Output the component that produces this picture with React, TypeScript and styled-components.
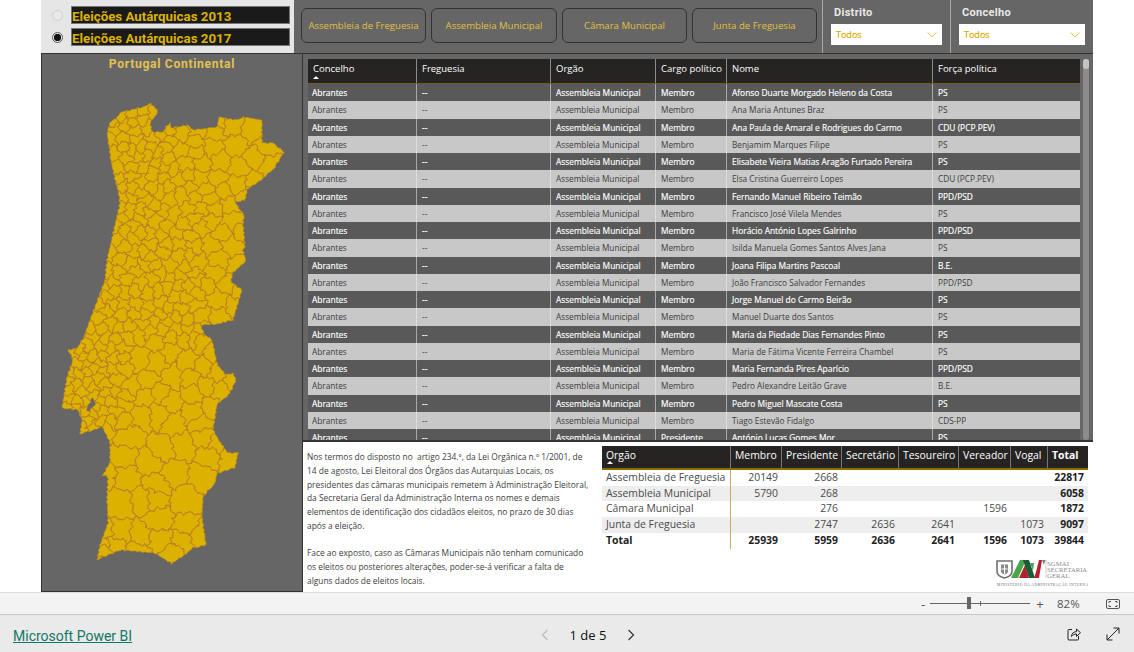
import React, { useMemo } from "react";
import styled, { createGlobalStyle } from "styled-components";

const Global = createGlobalStyle`
  html, body { margin: 0; padding: 0; background: #fff; overflow: hidden; }
  * { box-sizing: border-box; }
  body { font-family: "Open Sans", "Liberation Sans", sans-serif; }
`;

const Page = styled.div`width: 1134px; height: 652px; display: flex; flex-direction: column; background: #fff;`;
const Report = styled.div`width: 1052px; height: 592px; margin-left: 41px; display: flex; flex-direction: column; flex: none;`;
const TopRow = styled.div`height: 53px; display: flex; flex: none;`;
const RadioPanel = styled.div`width: 253px; flex: none; background: #e6e6e6; padding: 6px 4px 0 11px; display: flex; flex-direction: column; gap: 4px;`;
const RadioRow = styled.div`display: flex; align-items: center; gap: 8px; height: 18px;`;
const Radio = styled.span<{ $on?: boolean }>`
  width: 11px; height: 11px; border-radius: 50%; flex: none;
  border: 1px solid ${p => (p.$on ? "#555" : "#cfcfcf")};
  background: ${p => (p.$on ? "radial-gradient(circle, #111 0 3.4px, #eee 3.9px)" : "#e9e9e9")};
`;
const RadioLabel = styled.span`
  flex: 1; height: 18px; background: #1a1a1a; color: #dcb200; border: 1px solid #777;
  font: 700 13.3px/19px Roboto, sans-serif; white-space: nowrap; overflow: hidden;
`;
const Band = styled.div`flex: 1; min-width: 0; background: #666; display: flex; padding-left: 7px;`;
const Buttons = styled.div`display: flex; gap: 5px; padding-top: 8px; width: 521px; flex: none;`;
const PageButton = styled.div<{ $w: number }>`
  width: ${p => p.$w}px; height: 35px; border: 1.5px solid #333; border-radius: 6px; flex: none;
  color: #e0c040; font-size: 9.6px; display: flex; align-items: center; justify-content: center; white-space: nowrap;
`;
const Slicer = styled.div<{ $w: number }>`
  width: ${p => p.$w}px; border-left: 1px solid #a8a8a8; padding: 5px 8px 0 8px; flex: none;
`;
const SlicerTitle = styled.div`color: #e8e8e8; font: 700 11px/15px Roboto, sans-serif; letter-spacing: .3px; padding-left: 3px;`;
const Select = styled.div`
  margin-top: 4px; height: 21px; background: #fff; color: #d9ad00; font-size: 9px; -webkit-text-stroke: .2px #d9ad00;
  display: flex; align-items: center; justify-content: space-between; padding: 0 5px 0 5px;
`;
const Body = styled.div`flex: 1; display: flex; min-height: 0; border-top: 1px solid #333;`;
const MapPanel = styled.div`width: 262px; flex: none; background: #666; border: 1px solid #333; border-top: 0; display: flex; flex-direction: column;`;
const MapTitle = styled.div`height: 16px; text-align: center; color: #e2c152; font: 700 12.2px/20px Roboto, sans-serif; letter-spacing: .65px; flex: none;`;
const MapSvg = styled.svg`display: block; width: 260px; height: 522px; flex: none;`;
const RightCol = styled.div`flex: 1; display: flex; flex-direction: column; min-width: 0;`;
const TablePanel = styled.div`height: 388px; background: #666; border-bottom: 2px solid #333; display: flex; padding: 5px 2px 0 5px; gap: 3px; flex: none;`;
const TableView = styled.div`width: 772px; overflow: hidden; flex: none;`;
const GRID = "109px 134px 105px 71px 206px 147px";
const HeadRow = styled.div`
  display: grid; grid-template-columns: ${GRID}; height: 25px; background: #252423; border-bottom: 1px solid #6d5f22;
`;
const HeadCell = styled.div`
  position: relative; color: #fff; font-size: 9.5px; line-height: 19px; padding-left: 5px;
  border-right: 1px solid #8a8a8a; white-space: nowrap;
  &:last-child { border-right: 0; }
`;
const SortCaret = styled.i`
  position: absolute; left: 5px; bottom: 4px; width: 0; height: 0;
  border-left: 3.5px solid transparent; border-right: 3.5px solid transparent; border-bottom: 3px solid #fff;
`;
const DataRow = styled.div<{ $light: boolean }>`
  display: grid; grid-template-columns: ${GRID}; height: 17.25px;
  background: ${p => (p.$light ? "#c8c8c8" : "#595959")};
  color: ${p => (p.$light ? "#3c3c3c" : "#fff")};
  -webkit-text-stroke: ${p => (p.$light ? "0" : ".15px #fff")};
`;
const DataCell = styled.div<{ $light: boolean }>`
  font-size: ${p => (p.$light ? 8.25 : 8.4)}px; line-height: 17.6px; padding-left: 5px; white-space: nowrap; overflow: hidden;
  border-right: 1px solid ${p => (p.$light ? "#dedede" : "#a9a9a9")};
  &:first-child { padding-left: 4px; }
  &:last-child { border-right: 0; }
`;
const Scroll = styled.div`width: 6px; background: #8c8c8c; border-radius: 3px; position: relative; flex: none;`;
const Thumb = styled.div`position: absolute; top: 0; left: 0; width: 6px; height: 10px; border-radius: 3px; background: #c4c4c4;`;
const BottomRow = styled.div`flex: 1; display: flex; min-height: 0; background: #fff;`;
const Note = styled.div`
  width: 299px; flex: none; padding: 8px 0 0 4px; color: #3d3d3d; font-size: 8.4px; line-height: 13.75px; white-space: pre;
`;
const RightBottom = styled.div`flex: 1; display: flex; flex-direction: column; min-width: 0; padding-top: 4px;`;
const MGRID = "129px 51px 60px 57px 60px 52px 37px 40px";
const MatrixHead = styled.div`
  display: grid; grid-template-columns: ${MGRID}; width: 486px; height: 24px; background: #252423; border-bottom: 2px solid #8c6d00; color: #fff;
`;
const MHeadCell = styled.div<{ $bold?: boolean }>`
  position: relative; font-size: 10.4px; line-height: 18px; padding-left: 4px; font-weight: ${p => (p.$bold ? 700 : 400)};
  border-right: 1px solid #777; white-space: nowrap;
  &:last-child { border-right: 0; }
`;
const MRow = styled.div<{ $alt?: boolean; $bold?: boolean }>`
  display: grid; grid-template-columns: ${MGRID}; width: 486px; height: 15.7px;
  background: ${p => (p.$alt ? "#eeeeee" : "#fff")};
  color: ${p => (p.$bold ? "#222" : "#4a4a4a")}; font-weight: ${p => (p.$bold ? 700 : 400)};
`;
const MLabel = styled.div`font-size: 10.4px; line-height: 15.8px; padding-left: 4px; border-right: 1px solid #c9ad58; white-space: nowrap;`;
const MValue = styled.div<{ $bold?: boolean }>`
  font-size: 10.4px; line-height: 15.8px; text-align: right; padding-right: 4px; white-space: nowrap;
  font-weight: ${p => (p.$bold ? 700 : "inherit")}; color: ${p => (p.$bold ? "#222" : "inherit")};
`;
const LogoWrap = styled.div`align-self: flex-end; margin-top: 12px; margin-right: 5px; width: 92px; height: 30px;`;
const ZoomBar = styled.div`
  height: 23px; flex: none; background: #f3f3f3; border-top: 1px solid #ddd; border-bottom: 1px solid #c8c8c8;
  display: flex; align-items: center; justify-content: flex-end; padding-right: 14px; color: #555; font-size: 11.5px;
`;
const ZoomMark = styled.span`width: 10px; text-align: center; font-size: 13px; line-height: 16px; color: #555;`;
const Slider = styled.div`position: relative; width: 100px; height: 1px; background: #666; margin: 0 5px 0 2px;`;
const SliderThumb = styled.i`position: absolute; left: 37px; top: -6px; width: 4px; height: 12px; background: #666;`;
const SliderTick = styled.i`position: absolute; left: 50px; top: -2px; width: 1px; height: 5px; background: #666;`;
const ZoomValue = styled.span`margin-left: 12px; width: 25px;`;
const FitIcon = styled.svg`margin-left: 24px; display: block;`;
const Footer = styled.div`flex: 1; background: #eaeaea; display: flex; align-items: center; padding: 0 14px 0 13px;`;
const Link = styled.a`color: #117865; font: 400 14px/18px Roboto, sans-serif; text-decoration: underline; width: 120px; margin-top: 5px; white-space: nowrap; flex: none;`;
const Pager = styled.div`margin-left: 408px; display: flex; align-items: center; width: 94px; justify-content: space-between; color: #111; font: 400 13px/16px "Open Sans", sans-serif; margin-top: 2px;`;
const FooterIcons = styled.div`margin-left: auto; display: flex; gap: 25px; align-items: center;`;

/* ---------- map ---------- */
const OUTLINE: number[][] = [[83,339],[105,280],[107,260],[120,203],[118,190],[112,167],[107,133],[110,123],[122,112],[143,107],[151,103],[158,112],[150,123],[152,132],[162,132],[170,123],[171,128],[188,125],[193,130],[217,127],[219,117],[235,120],[243,117],[262,120],[262,143],[273,143],[284,152],[273,170],[263,178],[247,190],[245,200],[235,202],[244,215],[243,223],[245,247],[243,250],[246,262],[233,272],[231,282],[242,290],[233,320],[217,324],[200,325],[204,334],[212,340],[217,363],[225,375],[233,373],[236,380],[230,393],[217,405],[213,430],[227,453],[238,453],[235,468],[217,473],[215,483],[203,497],[202,517],[206,545],[193,548],[172,564],[155,553],[120,550],[97,560],[100,545],[108,523],[107,497],[108,477],[103,475],[110,462],[110,443],[102,427],[80,434],[82,420],[78,410],[62,408],[67,377],[73,360],[68,350],[77,348]];
const HOLE: number[][] = [[93,397],[95,404],[89,412],[86,410],[90,402]];
/* the large municipalities of the south, as read from the picture (crop coordinates, /3 + origin) */
const SOUTH: number[][] = [[200,320],[190,380],[200,440],[270,400],[340,430],[430,440],[370,345],[450,380],[290,462],[310,360],[180,520],[280,505],[380,510],[250,510],[295,570],[380,590],[180,610],[240,620],[300,630],[370,630],[415,615],[130,660],[165,640],[230,660],[340,670],[210,170],[240,90],[290,100],[340,140],[250,250],[340,280],[420,280],[440,170],[480,180],[380,90],[430,110],[300,190],[330,215],[470,130],[400,250],[430,320],[400,190],[470,340],[510,390]].map(([x, y]) => [x / 3 + 60, y / 3 + 330]);

const wob = (x: number, y: number): [number, number] => [
  x + 1.5 * Math.sin(y * 0.63 + x * 0.21) + 0.9 * Math.sin(y * 1.37 - x * 0.9) + 0.35 * Math.sin(y * 3.1 + x * 2.3),
  y + 1.5 * Math.sin(x * 0.57 - y * 0.19) + 0.9 * Math.sin(x * 1.29 + y * 0.8) + 0.35 * Math.sin(x * 2.9 - y * 2.1),
];
const rim = (x: number, y: number): [number, number] => [
  x + 0.7 * Math.sin(y * 1.3 + x * 0.7),
  y + 0.7 * Math.sin(x * 1.5 - y * 0.6),
];
function inPoly(x: number, y: number, poly: number[][]) {
  let c = false;
  for (let i = 0, j = poly.length - 1; i < poly.length; j = i++) {
    const [xi, yi] = poly[i], [xj, yj] = poly[j];
    if (yi > y !== yj > y && x < ((xj - xi) * (y - yi)) / (yj - yi) + xi) c = !c;
  }
  return c;
}
function toPath(poly: number[][], step: number, warp: (x: number, y: number) => [number, number]) {
  let d = "";
  poly.forEach((a, i) => {
    const b = poly[(i + 1) % poly.length];
    const n = Math.max(1, Math.round(Math.hypot(b[0] - a[0], b[1] - a[1]) / step));
    for (let k = 0; k < n; k++) {
      const [px, py] = warp(a[0] + ((b[0] - a[0]) * k) / n, a[1] + ((b[1] - a[1]) * k) / n);
      d += `${d ? "L" : "M"}${px.toFixed(1)} ${py.toFixed(1)}`;
    }
  });
  return d + "Z";
}
function buildCells() {
  let s = 20170101;
  const rnd = () => {
    s |= 0; s = (s + 0x6d2b79f5) | 0;
    let t = Math.imul(s ^ (s >>> 15), 1 | s);
    t = (t + Math.imul(t ^ (t >>> 7), 61 | t)) ^ t;
    return ((t ^ (t >>> 14)) >>> 0) / 4294967296;
  };
  const radius = (x: number, y: number) => {
    if (y > 425 && x > 105) return 60;
    if (y > 340 && x > 125) return 15;
    if (y > 340) return 7.5;
    if (y < 240) return (x < 170 ? 8.5 : 10.5) + Math.max(0, x - 215) * 0.18;
    return x > 200 ? 13.5 : 8.5;
  };
  const sites: number[][] = SOUTH.slice();
  for (let i = 0; i < 20000; i++) {
    const x = 62 + rnd() * 224, y = 103 + rnd() * 461;
    if (!inPoly(x, y, OUTLINE)) continue;
    const r = radius(x, y);
    if (sites.every(q => Math.hypot(q[0] - x, q[1] - y) > r)) sites.push([x, y]);
  }
  const d: string[] = [];
  sites.forEach((p, i) => {
    let poly = [[40, 90], [300, 90], [300, 580], [40, 580]];
    sites.forEach((q, j) => {
      if (i === j || Math.hypot(p[0] - q[0], p[1] - q[1]) > 130) return;
      const mx = (p[0] + q[0]) / 2, my = (p[1] + q[1]) / 2, nx = q[0] - p[0], ny = q[1] - p[1];
      const side = (v: number[]) => (v[0] - mx) * nx + (v[1] - my) * ny;
      const out: number[][] = [];
      poly.forEach((a, k) => {
        const b = poly[(k + 1) % poly.length], sa = side(a), sb = side(b);
        if (sa <= 0) out.push(a);
        if (sa < 0 !== sb < 0) {
          const t = sa / (sa - sb);
          out.push([a[0] + (b[0] - a[0]) * t, a[1] + (b[1] - a[1]) * t]);
        }
      });
      poly = out;
    });
    if (poly.length > 2) d.push(toPath(poly, 2, wob));
  });
  return d.join("");
}

const PortugalMap: React.FC = () => {
  const cells = useMemo(buildCells, []);
  const shape = useMemo(() => toPath(OUTLINE, 2.5, rim) + toPath(HOLE, 3, rim), []);
  return (
    <MapSvg viewBox="42 70 260 522" aria-label="Mapa de Portugal Continental">
      <defs>
        <clipPath id="pt"><path d={shape} clipRule="evenodd" /></clipPath>
      </defs>
      <path d={shape} fill="#dcb100" fillRule="evenodd" stroke="#c08a1c" strokeWidth=".6" />
      <g clipPath="url(#pt)">
        <path d={cells} fill="none" stroke="#b8802a" strokeWidth=".8" strokeLinejoin="round" />
      </g>
    </MapSvg>
  );
};

/* ---------- data ---------- */
const ROWS: [string, string, string][] = [
  ["Membro", "Afonso Duarte Morgado Heleno da Costa", "PS"],
  ["Membro", "Ana Maria Antunes Braz", "PS"],
  ["Membro", "Ana Paula de Amaral e Rodrigues do Carmo", "CDU (PCP.PEV)"],
  ["Membro", "Benjamim Marques Filipe", "PS"],
  ["Membro", "Elisabete Vieira Matias Aragão Furtado Pereira", "PS"],
  ["Membro", "Elsa Cristina Guerreiro Lopes", "CDU (PCP.PEV)"],
  ["Membro", "Fernando Manuel Ribeiro Teimão", "PPD/PSD"],
  ["Membro", "Francisco José Vilela Mendes", "PS"],
  ["Membro", "Horácio António Lopes Galrinho", "PPD/PSD"],
  ["Membro", "Isilda Manuela Gomes Santos Alves Jana", "PS"],
  ["Membro", "Joana Filipa Martins Pascoal", "B.E."],
  ["Membro", "João Francisco Salvador Fernandes", "PPD/PSD"],
  ["Membro", "Jorge Manuel do Carmo Beirão", "PS"],
  ["Membro", "Manuel Duarte dos Santos", "PS"],
  ["Membro", "Maria da Piedade Dias Fernandes Pinto", "PS"],
  ["Membro", "Maria de Fátima Vicente Ferreira Chambel", "PS"],
  ["Membro", "Maria Fernanda Pires Aparício", "PPD/PSD"],
  ["Membro", "Pedro Alexandre Leitão Grave", "B.E."],
  ["Membro", "Pedro Miguel Mascate Costa", "PS"],
  ["Membro", "Tiago Estevão Fidalgo", "CDS-PP"],
  ["Presidente", "António Lucas Gomes Mor", "PS"],
];
const HEADS = ["Concelho", "Freguesia", "Orgão", "Cargo político", "Nome", "Força política"];
const MHEADS = ["Orgão", "Membro", "Presidente", "Secretário", "Tesoureiro", "Vereador", "Vogal", "Total"];
const MROWS: string[][] = [
  ["Assembleia de Freguesia", "20149", "2668", "", "", "", "", "22817"],
  ["Assembleia Municipal", "5790", "268", "", "", "", "", "6058"],
  ["Câmara Municipal", "", "276", "", "", "1596", "", "1872"],
  ["Junta de Freguesia", "", "2747", "2636", "2641", "", "1073", "9097"],
  ["Total", "25939", "5959", "2636", "2641", "1596", "1073", "39844"],
];
const NOTE = `Nos termos do disposto no  artigo 234.º, da Lei Orgânica n.º 1/2001, de
14 de agosto, Lei Eleitoral dos Órgãos das Autarquias Locais, os
presidentes das câmaras municipais remetem à Administração Eleitoral,
da Secretaria Geral da Administração Interna os nomes e demais
elementos de identificação dos cidadãos eleitos, no prazo de 30 dias
após a eleição.

Face ao exposto, caso as Câmaras Municipais não tenham comunicado
os eleitos ou posteriores alterações, poder-se-á verificar a falta de
alguns dados de eleitos locais.`;

const Chevron: React.FC<{ color: string }> = ({ color }) => (
  <svg width="10" height="6" viewBox="0 0 10 6"><path d="M.5 .5L5 5l4.500-4.500" fill="none" stroke={color} strokeWidth="1" /></svg>
);

const Logo: React.FC = () => (
  <svg width="92" height="30" viewBox="0 0 92 30">
    <path d="M1 1h15v10c0 4-3 6-7.500 7C4 17 1 15 1 11z" fill="#fff" stroke="#6f6f6f" strokeWidth="1.6" />
    <path d="M5 4.500h7v7c0 1.500-2 2.500-3.500 3-1.500-.5-3.500-1.500-3.500-3z" fill="#8a8a8a" />
    <path d="M8.500 5v9M5.500 9h6" stroke="#fff" strokeWidth="1" />
    <path d="M15 18L24 0h6l-8 18z" fill="#4aa64a" />
    <path d="M23 18l6-13 4 13z" fill="#b5202a" />
    <path d="M27 0h6l6 18h-6z" fill="#1a5c38" />
    <path d="M34 3l4 0-1 8z" fill="#4aa64a" />
    <path d="M38 18l2-6 3-12h3l-3 18z" fill="#b5202a" />
    <path d="M46 0h3.500l-1.700 5z" fill="#808080" />
    <path d="M50 0v18" stroke="#bbb" strokeWidth=".7" />
    <text x="51" y="6" fontFamily="Liberation Serif, serif" fontSize="6.800" fill="#8c8c8c">SGMAI</text>
    <text x="51" y="12" fontFamily="Liberation Serif, serif" fontSize="6.600" fill="#8c8c8c">SECRETARIA</text>
    <text x="51" y="18" fontFamily="Liberation Serif, serif" fontSize="6.800" fill="#8c8c8c">GERAL</text>
    <text x="1" y="26" fontFamily="Liberation Serif, serif" fontSize="3.500" letterSpacing=".55" fill="#666">MINISTÉRIO DA ADMINISTRAÇÃO INTERNA</text>
  </svg>
);

export default function App() {
  return (
    <Page>
      <Global />
      <Report>
        <TopRow>
          <RadioPanel>
            <RadioRow><Radio /><RadioLabel>Eleições Autárquicas 2013</RadioLabel></RadioRow>
            <RadioRow><Radio $on /><RadioLabel>Eleições Autárquicas 2017</RadioLabel></RadioRow>
          </RadioPanel>
          <Band>
            <Buttons>
              <PageButton $w={125}>Assembleia de Freguesia</PageButton>
              <PageButton $w={126}>Assembleia Municipal</PageButton>
              <PageButton $w={125}>Câmara Municipal</PageButton>
              <PageButton $w={125}>Junta de Freguesia</PageButton>
            </Buttons>
            <Slicer $w={128}>
              <SlicerTitle>Distrito</SlicerTitle>
              <Select>Todos<Chevron color="#e3c84f" /></Select>
            </Slicer>
            <Slicer $w={143}>
              <SlicerTitle>Concelho</SlicerTitle>
              <Select>Todos<Chevron color="#e3c84f" /></Select>
            </Slicer>
          </Band>
        </TopRow>
        <Body>
          <MapPanel>
            <MapTitle>Portugal Continental</MapTitle>
            <PortugalMap />
          </MapPanel>
          <RightCol>
            <TablePanel>
              <TableView>
                <HeadRow>
                  {HEADS.map((h, i) => (
                    <HeadCell key={h}>{h}{i === 0 && <SortCaret />}</HeadCell>
                  ))}
                </HeadRow>
                {ROWS.map((r, i) => {
                  const light = i % 2 === 1;
                  return (
                    <DataRow key={r[1]} $light={light}>
                      {["Abrantes", "--", "Assembleia Municipal", r[0], r[1], r[2]].map((c, k) => (
                        <DataCell key={k} $light={light}>{c}</DataCell>
                      ))}
                    </DataRow>
                  );
                })}
              </TableView>
              <Scroll><Thumb /></Scroll>
            </TablePanel>
            <BottomRow>
              <Note>{NOTE}</Note>
              <RightBottom>
                <MatrixHead>
                  {MHEADS.map((h, i) => (
                    <MHeadCell key={h} $bold={i === 7}>
                      {h}{i === 0 && <SortCaret />}
                    </MHeadCell>
                  ))}
                </MatrixHead>
                {MROWS.map((r, i) => (
                  <MRow key={r[0]} $alt={i % 2 === 1} $bold={i === 4}>
                    <MLabel>{r[0]}</MLabel>
                    {r.slice(1).map((v, k) => <MValue key={k} $bold={k === 6}>{v}</MValue>)}
                  </MRow>
                ))}
                <LogoWrap><Logo /></LogoWrap>
              </RightBottom>
            </BottomRow>
          </RightCol>
        </Body>
      </Report>
      <ZoomBar>
        <ZoomMark>-</ZoomMark>
        <Slider><SliderThumb /><SliderTick /></Slider>
        <ZoomMark>+</ZoomMark>
        <ZoomValue>82%</ZoomValue>
        <FitIcon width="14" height="10" viewBox="0 0 14 10">
          <rect x=".5" y=".5" width="13" height="9" rx="1.500" fill="none" stroke="#555" />
          <path d="M3 4V2.500h2M9 2.500h2V4M3 6v1.500h2M9 7.500h2V6" fill="none" stroke="#555" />
        </FitIcon>
      </ZoomBar>
      <Footer>
        <Link href="#">Microsoft Power BI</Link>
        <Pager>
          <svg width="8" height="12" viewBox="0 0 8 12"><path d="M6.500 1L1.500 6l5 5" fill="none" stroke="#bbb" strokeWidth="1.200" /></svg>
          <span>1 de 5</span>
          <svg width="8" height="12" viewBox="0 0 8 12"><path d="M1.500 1l5 5-5 5" fill="none" stroke="#333" strokeWidth="1.200" /></svg>
        </Pager>
        <FooterIcons>
          <svg width="14" height="14" viewBox="0 0 14 14">
            <path d="M5 2.500H2a1 1 0 0 0-1 1V12a1 1 0 0 0 1 1h8.500a1 1 0 0 0 1-1V9" fill="none" stroke="#222" />
            <path d="M4.500 9.500c0-3 2-4.800 5-4.800V2l4 3.700-4 3.700V7c-2 0-3.500.6-5 2.500z" fill="none" stroke="#222" />
          </svg>
          <svg width="14" height="14" viewBox="0 0 14 14">
            <path d="M1 13L13 1M7.500 1H13v5.500M1 7.500V13h5.500" fill="none" stroke="#222" />
          </svg>
        </FooterIcons>
      </Footer>
    </Page>
  );
}
